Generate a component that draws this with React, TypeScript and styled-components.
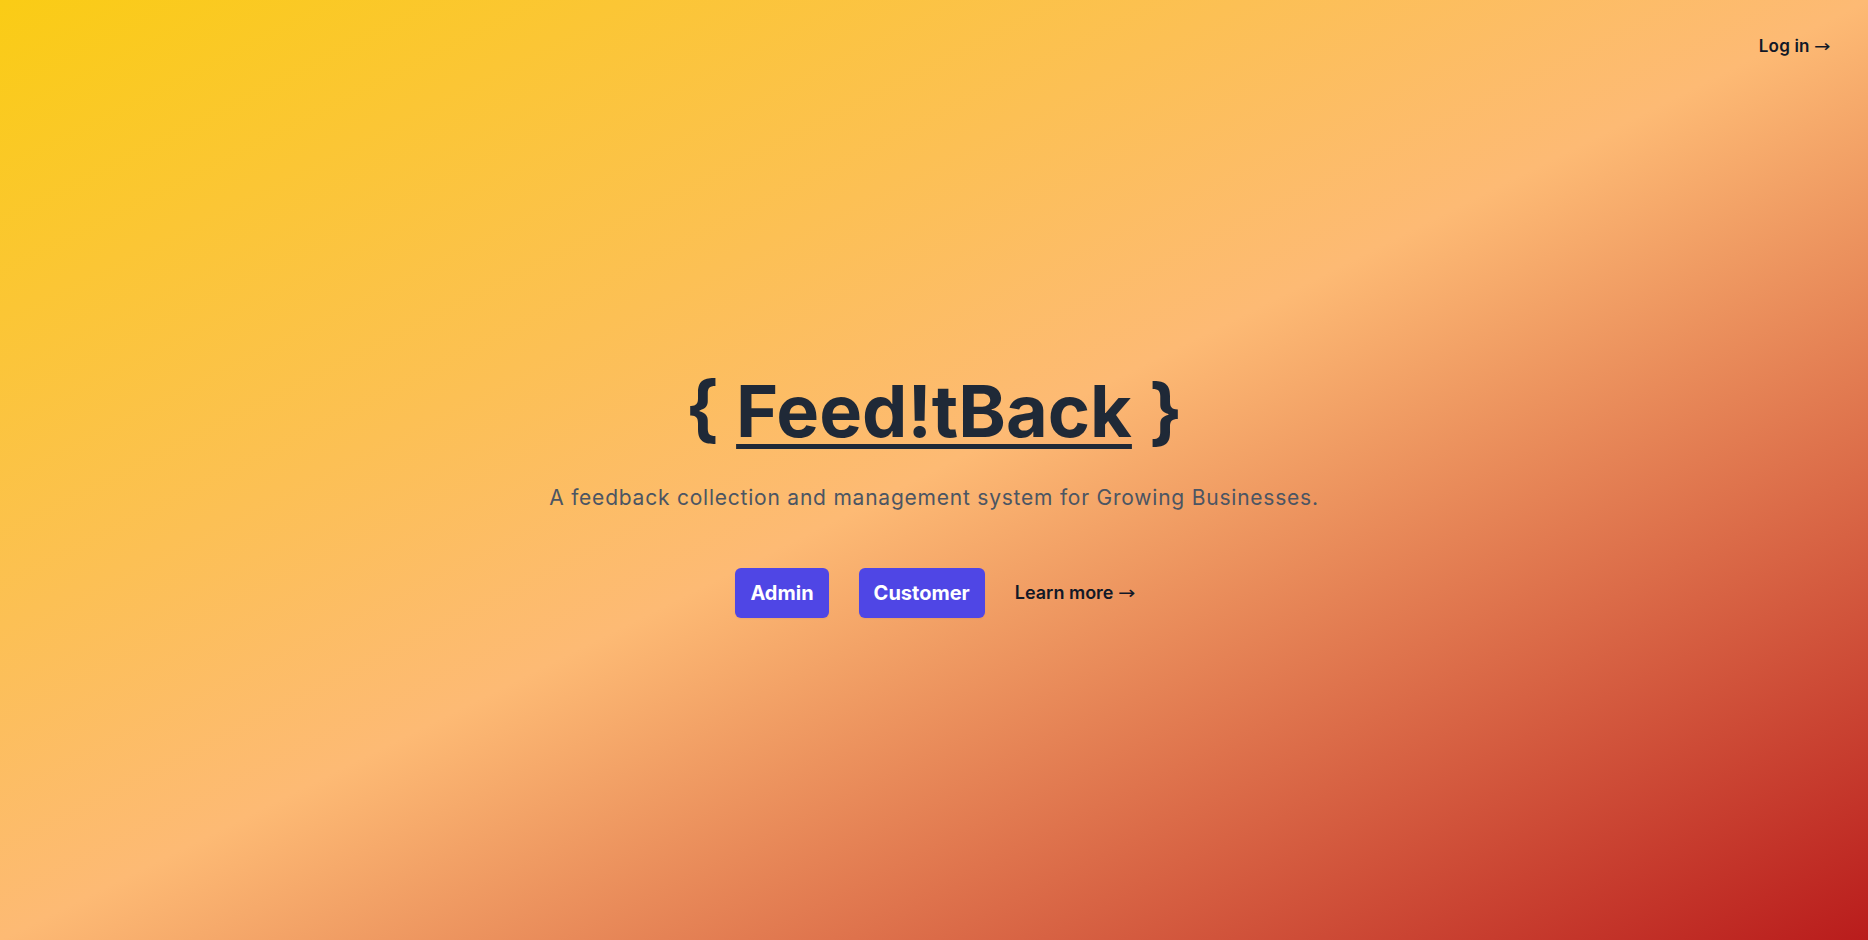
import React from "react";
import styled, { createGlobalStyle } from "styled-components";

const Global = createGlobalStyle`
  html, body { margin: 0; padding: 0; }
  body { font-family: Inter, "Noto Sans", sans-serif; -webkit-font-smoothing: antialiased; }
  * { box-sizing: border-box; }
`;

const Page = styled.div`
  min-height: 100vh;
  display: flex;
  flex-direction: column;
  background-image: linear-gradient(to bottom right, #facc15, #fdba74, #b91c1c);
`;

const Header = styled.header`
  display: flex;
  justify-content: flex-end;
  padding: 34px 40px 0 40px;
`;

const NavLink = styled.a`
  font-size: 17px;
  line-height: 24px;
  font-weight: 600;
  color: #111827;
  text-decoration: none;
  letter-spacing: 0.01em;
`;

const Arrow = styled.span`
  font-family: "DejaVu Sans", sans-serif;
  font-weight: 400;
  margin-left: 4px;
  display: inline-block;
  transform: scaleX(1.15);
  transform-origin: left center;
`;

const Hero = styled.main`
  display: flex;
  flex-direction: column;
  align-items: center;
  padding-top: 313px;
`;

const Title = styled.h1`
  margin: 0;
  font-size: 72px;
  line-height: 80px;
  font-weight: 700;
  letter-spacing: 0;
  color: #1f2937;
`;

const TitleLink = styled.a`
  color: inherit;
  text-decoration: underline;
  text-decoration-thickness: 5px;
  text-underline-offset: 7px;
`;

const Subtitle = styled.p`
  margin: 31px 0 0 0;
  font-size: 21px;
  line-height: 32px;
  letter-spacing: 0.037em;
  color: #4b5563;
`;

const Actions = styled.div`
  margin-top: 54px;
  display: flex;
  align-items: center;
  gap: 30px;
`;

const Button = styled.a`
  display: inline-flex;
  align-items: center;
  height: 50px;
  padding: 0 15px;
  border-radius: 6px;
  background: #4f46e5;
  color: #ffffff;
  font-size: 20px;
  font-weight: 700;
  text-decoration: none;
  box-shadow: 0 1px 2px rgba(0, 0, 0, 0.05);
`;

const TextLink = styled.a`
  font-size: 18px;
  line-height: 24px;
  font-weight: 600;
  color: #111827;
  text-decoration: none;
`;

export default function App() {
  return (
    <>
      <Global />
      <Page>
        <Header>
          <NavLink href="#">
            Log in<Arrow>→</Arrow>
          </NavLink>
        </Header>
        <Hero>
          <Title>
            {"{ "}
            <TitleLink href="#">Feed!tBack</TitleLink>
            {" }"}
          </Title>
          <Subtitle>A feedback collection and management system for Growing Businesses.</Subtitle>
          <Actions>
            <Button href="#">Admin</Button>
            <Button href="#">Customer</Button>
            <TextLink href="#">
              Learn more<Arrow>→</Arrow>
            </TextLink>
          </Actions>
        </Hero>
      </Page>
    </>
  );
}
